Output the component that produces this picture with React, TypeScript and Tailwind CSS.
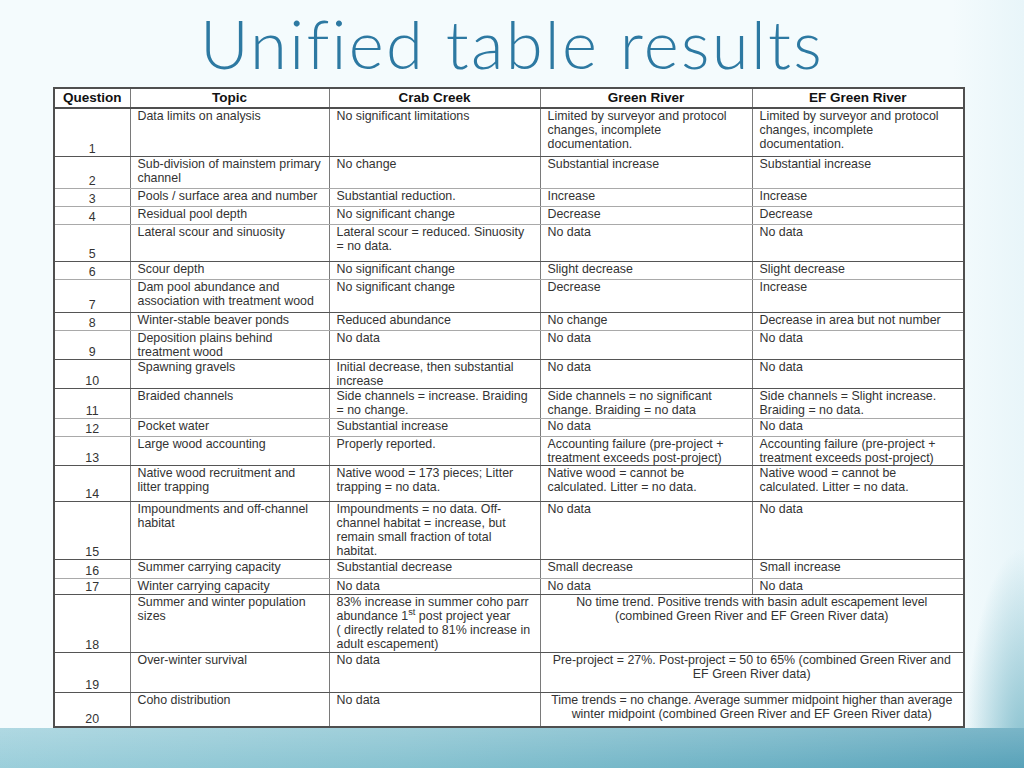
type Row = {
  q: string;
  topic: string[];
  crab: React.ReactNode[];
  green?: string[];
  ef?: string[];
  merged?: string[];
  h: string;
  dark?: boolean;
};

const rows: Row[] = [
  {
    q: "1",
    topic: ["Data limits on analysis"],
    crab: ["No significant limitations"],
    green: ["Limited by surveyor and protocol", "changes, incomplete", "documentation."],
    ef: ["Limited by surveyor and protocol", "changes, incomplete", "documentation."],
    h: "h-[48px]",
    dark: true,
  },
  {
    q: "2",
    topic: ["Sub-division of mainstem primary", "channel"],
    crab: ["No change"],
    green: ["Substantial increase"],
    ef: ["Substantial increase"],
    h: "h-[32px]",
  },
  {
    q: "3",
    topic: ["Pools / surface area and number"],
    crab: ["Substantial reduction."],
    green: ["Increase"],
    ef: ["Increase"],
    h: "h-[18px]",
  },
  {
    q: "4",
    topic: ["Residual pool depth"],
    crab: ["No significant change"],
    green: ["Decrease"],
    ef: ["Decrease"],
    h: "h-[18px]",
  },
  {
    q: "5",
    topic: ["Lateral scour and sinuosity"],
    crab: ["Lateral scour = reduced. Sinuosity", "= no data."],
    green: ["No data"],
    ef: ["No data"],
    h: "h-[37px]",
    dark: true,
  },
  {
    q: "6",
    topic: ["Scour depth"],
    crab: ["No significant change"],
    green: ["Slight decrease"],
    ef: ["Slight decrease"],
    h: "h-[18px]",
  },
  {
    q: "7",
    topic: ["Dam pool abundance and", "association with treatment wood"],
    crab: ["No significant change"],
    green: ["Decrease"],
    ef: ["Increase"],
    h: "h-[33px]",
    dark: true,
  },
  {
    q: "8",
    topic: ["Winter-stable beaver ponds"],
    crab: ["Reduced abundance"],
    green: ["No change"],
    ef: ["Decrease in area but not number"],
    h: "h-[18px]",
  },
  {
    q: "9",
    topic: ["Deposition plains behind", "treatment wood"],
    crab: ["No data"],
    green: ["No data"],
    ef: ["No data"],
    h: "h-[29px]",
    dark: true,
  },
  {
    q: "10",
    topic: ["Spawning gravels"],
    crab: ["Initial decrease, then substantial", "increase"],
    green: ["No data"],
    ef: ["No data"],
    h: "h-[29px]",
    dark: true,
  },
  {
    q: "11",
    topic: ["Braided channels"],
    crab: ["Side channels = increase. Braiding", "= no change."],
    green: ["Side channels = no significant", "change. Braiding = no data"],
    ef: ["Side channels = Slight increase.", "Braiding = no data."],
    h: "h-[30px]",
  },
  {
    q: "12",
    topic: ["Pocket water"],
    crab: ["Substantial increase"],
    green: ["No data"],
    ef: ["No data"],
    h: "h-[18px]",
  },
  {
    q: "13",
    topic: ["Large wood accounting"],
    crab: ["Properly reported."],
    green: ["Accounting failure (pre-project +", "treatment exceeds post-project)"],
    ef: ["Accounting failure (pre-project +", "treatment exceeds post-project)"],
    h: "h-[29px]",
    dark: true,
  },
  {
    q: "14",
    topic: ["Native wood recruitment and", "litter trapping"],
    crab: ["Native wood = 173 pieces; Litter", "trapping = no data."],
    green: ["Native wood = cannot be", "calculated. Litter = no data."],
    ef: ["Native wood = cannot be", "calculated. Litter = no data."],
    h: "h-[36px]",
    dark: true,
  },
  {
    q: "15",
    topic: ["Impoundments and off-channel", "habitat"],
    crab: [
      "Impoundments = no data. Off-",
      "channel habitat = increase, but",
      "remain small fraction of total",
      "habitat.",
    ],
    green: ["No data"],
    ef: ["No data"],
    h: "h-[58px]",
    dark: true,
  },
  {
    q: "16",
    topic: ["Summer carrying capacity"],
    crab: ["Substantial decrease"],
    green: ["Small decrease"],
    ef: ["Small increase"],
    h: "h-[19px]",
  },
  {
    q: "17",
    topic: ["Winter carrying capacity"],
    crab: ["No data"],
    green: ["No data"],
    ef: ["No data"],
    h: "h-[16px]",
    dark: true,
  },
  {
    q: "18",
    topic: ["Summer and winter population", "sizes"],
    crab: [
      "83% increase in summer coho parr",
      <>
        abundance 1<sup>st</sup> post project year
      </>,
      "( directly related to 81% increase in",
      "adult escapement)",
    ],
    merged: [
      "No time trend. Positive trends with basin adult escapement level",
      "(combined Green River and EF Green River data)",
    ],
    h: "h-[58px]",
    dark: true,
  },
  {
    q: "19",
    topic: ["Over-winter survival"],
    crab: ["No data"],
    merged: [
      "Pre-project = 27%. Post-project = 50 to 65% (combined Green River and",
      "EF Green River data)",
    ],
    h: "h-[40px]",
    dark: true,
  },
  {
    q: "20",
    topic: ["Coho distribution"],
    crab: ["No data"],
    merged: [
      "Time trends = no change. Average summer midpoint higher than average",
      "winter midpoint (combined Green River and EF Green River data)",
    ],
    h: "h-[35px]",
    dark: true,
  },
];

function Lines({ lines }: { lines: React.ReactNode[] }) {
  return (
    <>
      {lines.map((l, i) => (
        <div key={i} className="whitespace-nowrap">
          {l}
        </div>
      ))}
    </>
  );
}

export default function App() {
  return (
    <div className="w-[1024px] h-[768px] flex flex-col overflow-hidden bg-[radial-gradient(ellipse_60px_220px_at_100%_100%,#7fbccb,rgba(127,188,203,0)),linear-gradient(to_right,#f4fbfd_0%,#f4fbfd_93%,#e8f5f9_100%)] font-['Liberation_Sans',Arial,sans-serif]">
      <h1 className="h-[87px] shrink-0 pt-[10px] text-center font-['Lato',sans-serif] text-[67px] font-light leading-none tracking-[2.3px] text-[#2d79a2]">
        Unified table results
      </h1>

      <div className="pl-[53px] shrink-0">
        <table className="w-[910px] table-fixed border-collapse border-2 border-[#4f4f4f] bg-white text-[12.4px] leading-[14px] text-[#333333]">
          <colgroup>
            <col className="w-[76px]" />
            <col className="w-[199px]" />
            <col className="w-[211px]" />
            <col className="w-[212px]" />
            <col className="w-[212px]" />
          </colgroup>
          <thead>
            <tr className="h-[20px] text-[13.5px] font-bold text-[#111]">
              <th className="border border-[#7a7a7a] border-b-2 border-b-[#4f4f4f] align-middle">Question</th>
              <th className="border border-[#7a7a7a] border-b-2 border-b-[#4f4f4f] align-middle">Topic</th>
              <th className="border border-[#7a7a7a] border-b-2 border-b-[#4f4f4f] align-middle">Crab Creek</th>
              <th className="border border-[#7a7a7a] border-b-2 border-b-[#4f4f4f] align-middle">Green River</th>
              <th className="border border-[#7a7a7a] border-b-2 border-b-[#4f4f4f] align-middle">EF Green River</th>
            </tr>
          </thead>
          <tbody>
            {rows.map((r) => {
              const cell = r.dark
                ? "border border-[#7a7a7a] border-b-[#555555]"
                : "border border-[#7a7a7a] border-b-[#a9a9a9]";
              return (
                <tr key={r.q} className={r.h}>
                  <td className={`${cell} p-0 text-center align-bottom`}>{r.q}</td>
                  <td className={`${cell} pl-[7px] pr-1 pt-0 align-top`}>
                    <Lines lines={r.topic} />
                  </td>
                  <td className={`${cell} pl-[7px] pr-1 pt-0 align-top`}>
                    <Lines lines={r.crab} />
                  </td>
                  {r.merged ? (
                    <td colSpan={2} className={`${cell} px-1 pt-0 text-center align-top`}>
                      <Lines lines={r.merged} />
                    </td>
                  ) : (
                    <>
                      <td className={`${cell} pl-[7px] pr-1 pt-0 align-top`}>
                        <Lines lines={r.green ?? []} />
                      </td>
                      <td className={`${cell} pl-[7px] pr-1 pt-0 align-top`}>
                        <Lines lines={r.ef ?? []} />
                      </td>
                    </>
                  )}
                </tr>
              );
            })}
          </tbody>
        </table>
      </div>

      <div className="flex-1 bg-[linear-gradient(to_bottom,rgba(255,255,255,0.2),rgba(255,255,255,0)),linear-gradient(100deg,#9ccfdb_0%,#86c2d0_40%,#6cb1c4_75%,#58a2b9_100%)]" />
    </div>
  );
}
